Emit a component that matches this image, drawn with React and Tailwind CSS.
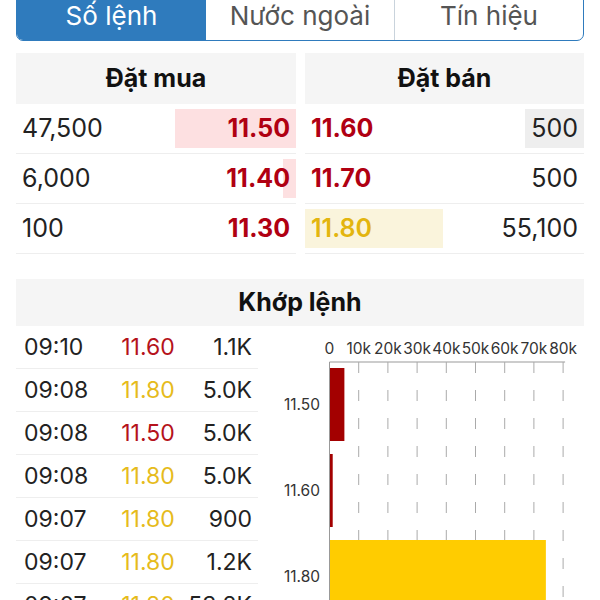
const bids = [
  { qty: '47,500', price: '11.50', bar: 121 },
  { qty: '6,000', price: '11.40', bar: 13 },
  { qty: '100', price: '11.30', bar: 0 },
];

const asks = [
  { price: '11.60', qty: '500', bar: 59, tone: 'red', barColor: 'bg-[#eeeeee]', barSide: 'right' },
  { price: '11.70', qty: '500', bar: 0, tone: 'red', barColor: '', barSide: 'right' },
  { price: '11.80', qty: '55,100', bar: 138, tone: 'yellow', barColor: 'bg-[#faf4dc]', barSide: 'left' },
];

const trades = [
  { time: '09:10', price: '11.60', vol: '1.1K', tone: 'red' },
  { time: '09:08', price: '11.80', vol: '5.0K', tone: 'yellow' },
  { time: '09:08', price: '11.50', vol: '5.0K', tone: 'red' },
  { time: '09:08', price: '11.80', vol: '5.0K', tone: 'yellow' },
  { time: '09:07', price: '11.80', vol: '900', tone: 'yellow' },
  { time: '09:07', price: '11.80', vol: '1.2K', tone: 'yellow' },
  { time: '09:07', price: '11.80', vol: '53.2K', tone: 'yellow' },
];

const volumeBars = [
  { label: '11.50', vol: 5100, color: '#a30000' },
  { label: '11.60', vol: 1100, color: '#a30000' },
  { label: '11.80', vol: 74100, color: '#ffcc00' },
];

function Tabs() {
  return (
    <div className="-mt-[10px] flex h-[51px] overflow-hidden rounded-b-[7px] border border-[#2f7bbd] text-[26px]">
      <div className="flex w-[189px] items-center justify-center bg-[#2f7bbd] text-white">Số lệnh</div>
      <div className="flex w-[189px] items-center justify-center border-r border-[#c9d3dc] text-[#555]">Nước ngoài</div>
      <div className="flex flex-1 items-center justify-center text-[#555]">Tín hiệu</div>
    </div>
  );
}

function OrderBook() {
  return (
    <div className="mt-3 grid grid-cols-[280px_279px] gap-[9px]">
      <div>
        <div className="flex h-[51px] items-center justify-center bg-[#f5f5f5] text-[25px] font-bold text-[#111]">Đặt mua</div>
        {bids.map((b) => (
          <div key={b.price} className="relative flex h-[50px] items-center border-b border-[#eeeeee] pl-[6px] pr-[6px] text-[25px]">
            {b.bar > 0 && (
              <div className="absolute right-0 top-[5px] bottom-[5px] bg-[#fde0e1]" style={{ width: b.bar }} />
            )}
            <span className="relative flex-1 text-[#222]">{b.qty}</span>
            <span className="relative font-bold text-[#b00012]">{b.price}</span>
          </div>
        ))}
      </div>
      <div>
        <div className="flex h-[51px] items-center justify-center bg-[#f5f5f5] text-[25px] font-bold text-[#111]">Đặt bán</div>
        {asks.map((a) => (
          <div key={a.price} className="relative flex h-[50px] items-center border-b border-[#eeeeee] pl-[6px] pr-[6px] text-[25px]">
            {a.bar > 0 && (
              <div
                className={`absolute top-[5px] bottom-[5px] ${a.barColor} ${a.barSide === 'right' ? 'right-0' : 'left-0'}`}
                style={{ width: a.bar }}
              />
            )}
            <span className={`relative flex-1 ${a.tone === 'red' ? 'font-bold text-[#b00012]' : 'font-semibold text-[#e3b50f]'}`}>{a.price}</span>
            <span className="relative text-[#222]">{a.qty}</span>
          </div>
        ))}
      </div>
    </div>
  );
}

function VolumeChart() {
  const x0 = 71.5;
  const step = 29.2;
  const top = 36;
  const band = 86;
  const ticks = ['0', '10k', '20k', '30k', '40k', '50k', '60k', '70k', '80k'];
  return (
    <svg width="326" height="275" className="block">
      {ticks.map((t, i) => (
        <text key={t} x={x0 + i * step} y="28" textAnchor="middle" fontSize="15.5" fill="#333" fontFamily="Inter, sans-serif">
          {t}
        </text>
      ))}
      <line x1={x0} y1={top} x2={x0 + 8 * step + 2} y2={top} stroke="#999" strokeWidth="1" />
      {ticks.slice(1).map((t, i) => (
        <line
          key={t}
          x1={x0 + (i + 1) * step}
          y1={top}
          x2={x0 + (i + 1) * step}
          y2="275"
          stroke="#aaa"
          strokeWidth="1"
          strokeDasharray="11 17"
        />
      ))}
      {volumeBars.map((b, i) => (
        <g key={b.label}>
          <rect x={x0} y={top + i * band + 6} width={(b.vol / 10000) * step} height="73" fill={b.color} />
          <text x="62" y={top + i * band + 48} textAnchor="end" fontSize="15.5" fill="#333" fontFamily="Inter, sans-serif">
            {b.label}
          </text>
        </g>
      ))}
      <line x1={x0} y1={top} x2={x0} y2="275" stroke="#999" strokeWidth="1" />
    </svg>
  );
}

function Trades() {
  return (
    <div className="mt-[25px]">
      <div className="flex h-[47px] items-center justify-center bg-[#f5f5f5] text-[25px] font-bold text-[#111]">Khớp lệnh</div>
      <div className="flex">
        <div className="w-[242px]">
          {trades.map((t, i) => (
            <div key={i} className="flex h-[43px] items-center border-b border-[#eeeeee] text-[23px] text-[#222]">
              <span className="w-[92px] pl-2">{t.time}</span>
              <span className={`w-[80px] text-center ${t.tone === 'red' ? 'text-[#b5121b]' : 'text-[#e6bb1c]'}`}>{t.price}</span>
              <span className="flex-1 pr-[6px] text-right">{t.vol}</span>
            </div>
          ))}
        </div>
        <VolumeChart />
      </div>
    </div>
  );
}

export default function App() {
  return (
    <div className="h-[600px] w-[600px] overflow-hidden bg-white px-4 font-['Inter',sans-serif]">
      <Tabs />
      <OrderBook />
      <Trades />
    </div>
  );
}
